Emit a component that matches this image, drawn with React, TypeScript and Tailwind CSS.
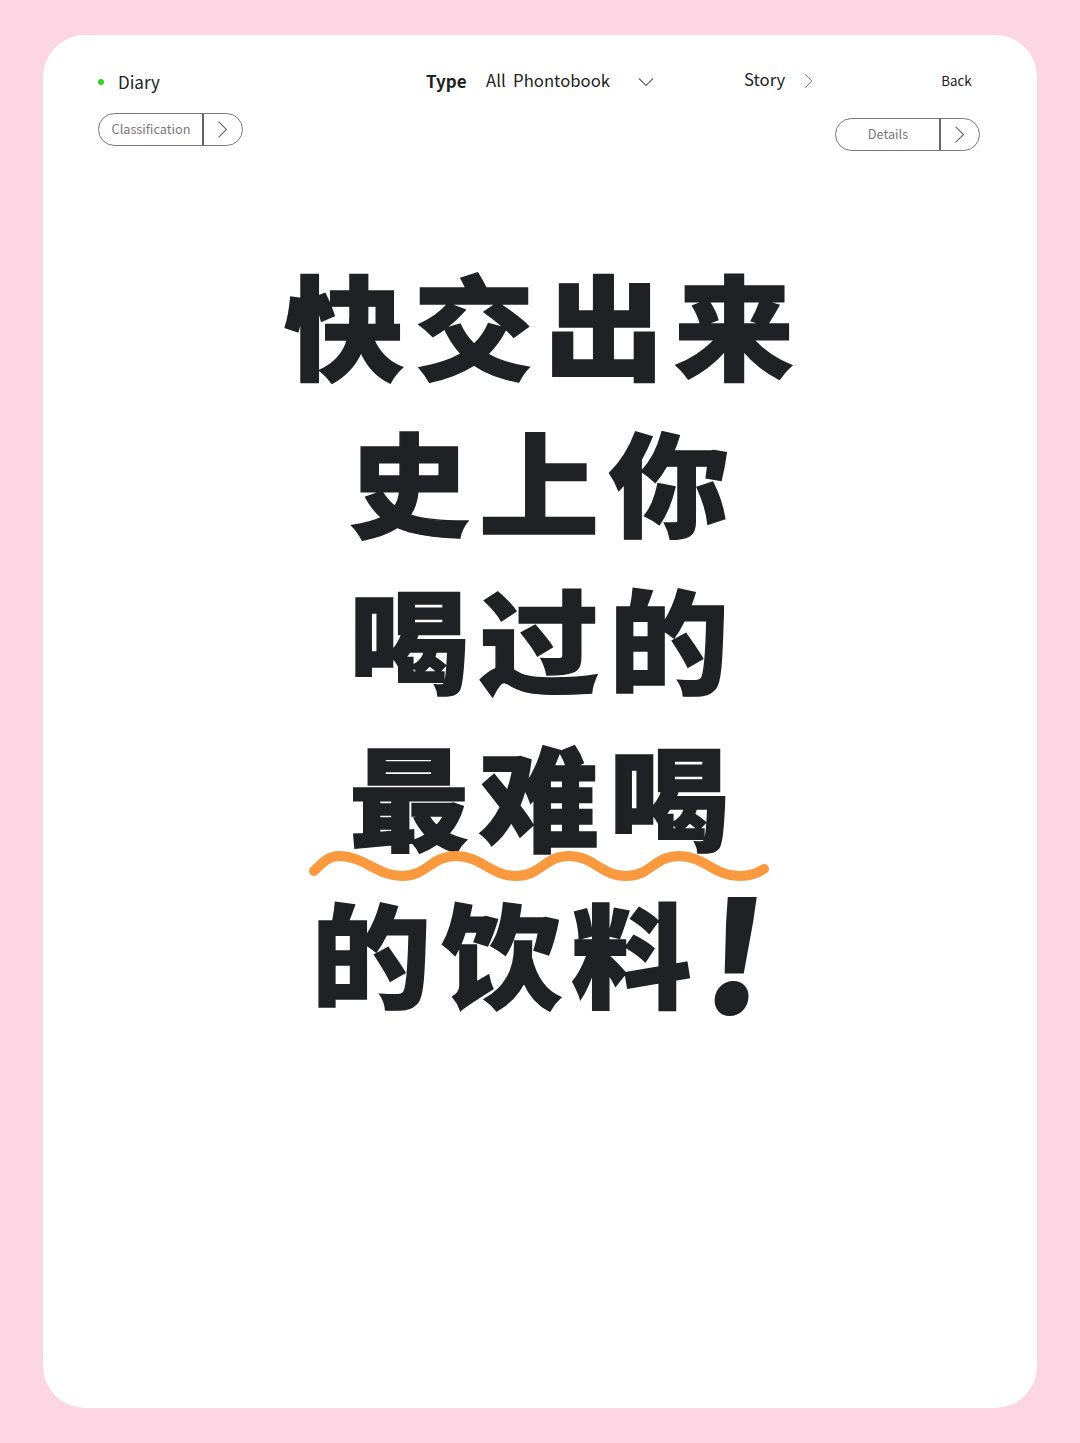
const CJK = "font-['Noto_Sans_CJK_SC','Noto_Sans',sans-serif]";

const LINES = ["快交出来", "史上你", "喝过的", "最难喝", "的饮料"];

function Chevron({ className }: { className: string }) {
  return (
    <svg className={className} viewBox="0 0 12 24" fill="none" stroke="currentColor" strokeWidth="1.4">
      <path d="M1 2 L11 12 L1 22" />
    </svg>
  );
}

function PillButton({ label }: { label: string }) {
  return (
    <div className="flex h-[33px] w-[145px] items-center rounded-full border-[1.5px] border-[#777] text-[#777]">
      <span className="-mt-[1px] w-[103px] pl-[1px] text-center text-[12.7px]">{label}</span>
      <span className="h-full w-[1.5px] bg-[#666]" />
      <div className="flex flex-1 justify-center">
        <Chevron className="h-[19px] w-[11px] text-[#666]" />
      </div>
    </div>
  );
}

export default function App() {
  return (
    <div className={`flex h-[1443px] w-[1080px] bg-[#fdd6e3] pt-[35px] pb-[35px] pl-[43px] pr-[43px] ${CJK}`}>
      <div className="flex flex-1 flex-col rounded-[42px] bg-white pt-[34px] pl-[55px] pr-[57px]">
        <div className="flex h-[26px] items-center text-[#222]">
          <span className="h-[6px] w-[6px] rounded-full bg-[#35cf2a]" />
          <span className="ml-[14px] w-[308px] text-[17px]">Diary</span>
          <span className="-mt-[3px] w-[60px] text-[17px] font-bold">Type</span>
          <span className="-mt-[3px] text-[16.7px] whitespace-pre">All  Phontobook</span>
          <svg className="ml-[28px] -mt-[1px] h-[10px] w-[16px] text-[#666]" viewBox="0 0 16 10" fill="none" stroke="currentColor" strokeWidth="1.2">
            <path d="M1 1.5 L8 8.5 L15 1.5" />
          </svg>
          <span className="ml-[90px] -mt-[4px] text-[16.7px]">Story</span>
          <Chevron className="ml-[19px] -mt-[2px] h-[16px] w-[9px] text-[#666]" />
          <span className="ml-[128px] -mt-[3px] text-[13.3px]">Back</span>
        </div>
        <div className="mt-[18px] flex items-start justify-between">
          <PillButton label="Classification" />
          <div className="mt-[5px]">
            <PillButton label="Details" />
          </div>
        </div>
        <div className="mt-[92px] flex flex-col items-center text-[#202124]">
          {LINES.map((line, i) => (
            <div key={line} className="relative flex h-[157px] items-center justify-center">
              <span
                className={
                  i === 4
                    ? "scale-y-[0.94] text-[120px] leading-none font-black tracking-[10px] whitespace-nowrap [-webkit-text-stroke:1.5px_#202124]"
                    : "ml-[10px] scale-y-[0.94] text-[120px] leading-none font-black tracking-[10px] whitespace-nowrap [-webkit-text-stroke:1.5px_#202124]"
                }
              >
                {line}
              </span>
              {i === 4 && (
                <span className="-mt-[4px] ml-[6px] text-[150px] leading-none font-black -skew-x-[6deg] [-webkit-text-stroke:2px_#202124]">
                  !
                </span>
              )}
              {i === 3 && (
                <svg className="absolute top-[135px] left-1/2 -ml-[230px] h-[34px] w-[460px]" viewBox="0 0 460 34" fill="none">
                  <path
                    d="M5 22 C14 13 20 7 30 7 C55 7 68 27 93 27 C118 27 122 7 147 7 C172 7 182 27 207 27 C232 27 235 7 260 7 C285 7 292 27 317 27 C342 27 345 7 370 7 C395 7 405 27 430 27 C442 27 448 24 455 20"
                    stroke="#fb993f"
                    strokeWidth="10"
                    strokeLinecap="round"
                  />
                </svg>
              )}
            </div>
          ))}
        </div>
      </div>
    </div>
  );
}
